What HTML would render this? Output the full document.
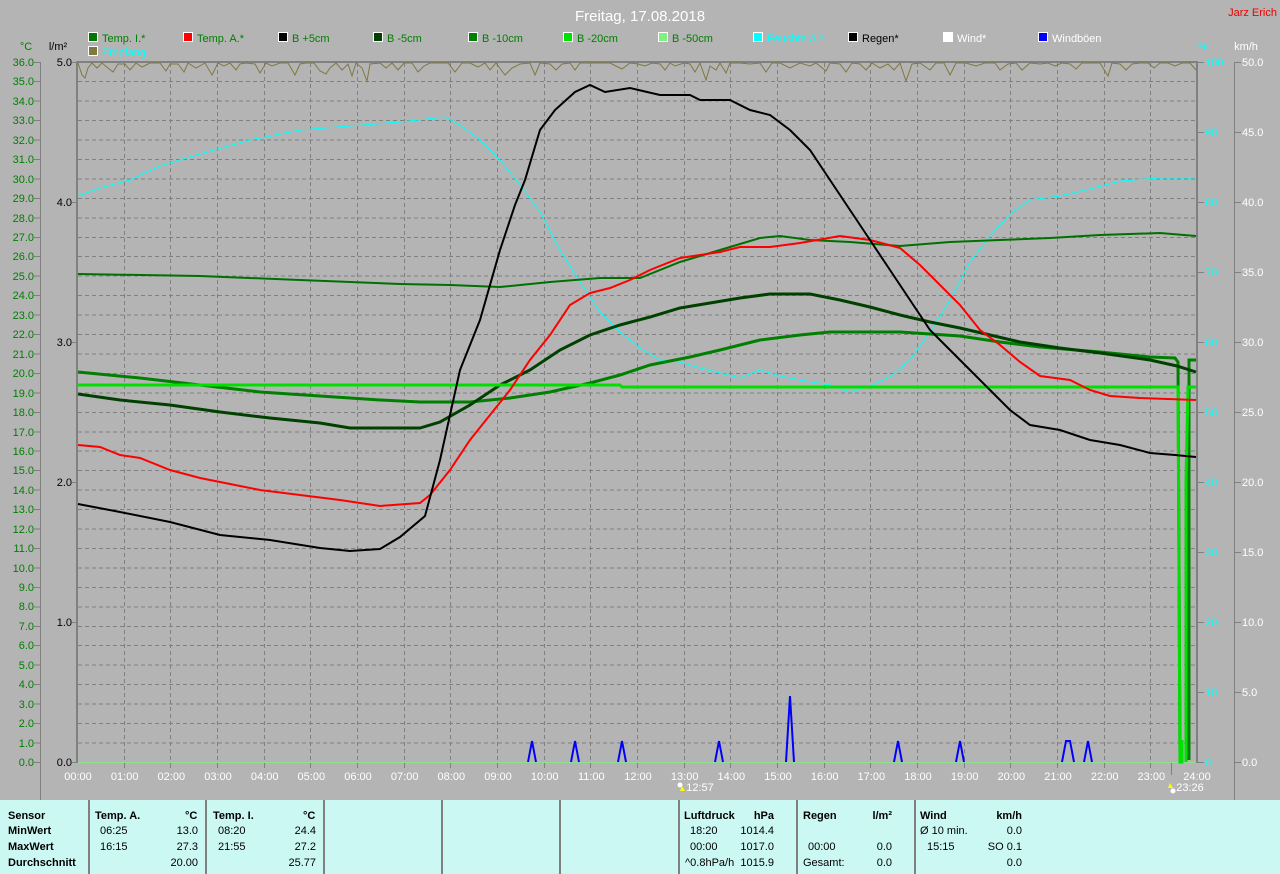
<!DOCTYPE html>
<html><head><meta charset="utf-8"><style>
body{margin:0;background:#b4b4b4;width:1280px;height:874px;overflow:hidden;font-family:"Liberation Sans",sans-serif}
svg{position:absolute;left:0;top:0}
.bp{position:absolute;left:0;top:800px;width:1280px;height:74px;background:#ccf8f4;font-size:11px;color:#000}
.bp div{position:absolute;white-space:nowrap}
.sep{position:absolute;top:0;width:2px;height:74px;background:#808080}
.b{font-weight:bold}
</style></head><body>
<svg width="1280" height="800" font-family="Liberation Sans, sans-serif" font-size="11">
<rect width="1280" height="800" fill="#b4b4b4"/>
<text x="640" y="21" fill="#fff" font-size="15" text-anchor="middle">Freitag, 17.08.2018</text>
<text x="1277" y="16" fill="#e00" font-size="11" text-anchor="end">Jarz Erich</text>
<g stroke="#fff" stroke-width="1">
<rect x="88.5" y="32.5" width="9" height="9" fill="#007800"/>
<rect x="183.5" y="32.5" width="9" height="9" fill="#f00"/>
<rect x="278.5" y="32.5" width="9" height="9" fill="#000"/>
<rect x="373.5" y="32.5" width="9" height="9" fill="#004000"/>
<rect x="468.5" y="32.5" width="9" height="9" fill="#008000"/>
<rect x="563.5" y="32.5" width="9" height="9" fill="#00e000"/>
<rect x="658.5" y="32.5" width="9" height="9" fill="#80f080"/>
<rect x="753.5" y="32.5" width="9" height="9" fill="#0ff"/>
<rect x="848.5" y="32.5" width="9" height="9" fill="#000"/>
<rect x="943.5" y="32.5" width="9" height="9" fill="#fff"/>
<rect x="1038.5" y="32.5" width="9" height="9" fill="#00f"/>
<rect x="88.5" y="46.5" width="9" height="9" fill="#807840"/>
</g>
<g font-size="11">
<text x="102" y="42" fill="#008000">Temp. I.*</text>
<text x="197" y="42" fill="#008000">Temp. A.*</text>
<text x="292" y="42" fill="#008000">B +5cm</text>
<text x="387" y="42" fill="#008000">B -5cm</text>
<text x="482" y="42" fill="#008000">B -10cm</text>
<text x="577" y="42" fill="#008000">B -20cm</text>
<text x="672" y="42" fill="#008000">B -50cm</text>
<text x="767" y="42" fill="#0ff">Feuchte A.*</text>
<text x="862" y="42" fill="#000">Regen*</text>
<text x="957" y="42" fill="#fff">Wind*</text>
<text x="1052" y="42" fill="#fff">Windböen</text>
<text x="102" y="56" fill="#0ff">Empfang</text>
<text x="26" y="50" fill="#008000" text-anchor="middle">°C</text>
<text x="58" y="50" fill="#000" text-anchor="middle">l/m²</text>
<text x="1203" y="50" fill="#0ff" text-anchor="middle">%</text>
<text x="1246" y="50" fill="#fff" text-anchor="middle">km/h</text>
</g>
<!-- axes -->
<g stroke="#808080" stroke-width="1">
<line x1="40.5" y1="62" x2="40.5" y2="800"/>
<line x1="1234.5" y1="62" x2="1234.5" y2="800"/>
</g>
<rect x="76" y="61" width="1122" height="2" fill="#808080"/>
<rect x="76" y="61" width="2" height="702" fill="#808080"/>
<rect x="1196" y="61" width="2" height="702" fill="#808080"/>
<line x1="78" y1="762.5" x2="1196" y2="762.5" stroke="#90e090"/>
<!-- grid -->
<path stroke="#808080" stroke-dasharray="4,3" fill="none" d="M78 81.5H1196M78 101H1196M78 120.5H1196M78 140H1196M78 159.5H1196M78 179H1196M78 198.5H1196M78 218H1196M78 237.5H1196M78 256.5H1196M78 276H1196M78 295.5H1196M78 315H1196M78 334.5H1196M78 354H1196M78 373.5H1196M78 393H1196M78 412.5H1196M78 432H1196M78 451H1196M78 470.5H1196M78 490H1196M78 509.5H1196M78 529H1196M78 548.5H1196M78 568H1196M78 587.5H1196M78 607H1196M78 626.5H1196M78 645.5H1196M78 665H1196M78 684.5H1196M78 704H1196M78 723.5H1196M78 743H1196
M124.5 63V762M170.5 63V762M217.5 63V762M264.5 63V762M310.5 63V762M357.5 63V762M404.5 63V762M450.5 63V762M497.5 63V762M544.5 63V762M590.5 63V762M637.5 63V762M684.5 63V762M730.5 63V762M777.5 63V762M824.5 63V762M870.5 63V762M917.5 63V762M964.5 63V762M1010.5 63V762M1057.5 63V762M1104.5 63V762M1150.5 63V762"/>
<!-- ticks -->
<path stroke="#808080" d="M34 62.5H41M34 81.5H41M34 101H41M34 120.5H41M34 140H41M34 159.5H41M34 179H41M34 198.5H41M34 218H41M34 237.5H41M34 256.5H41M34 276H41M34 295.5H41M34 315H41M34 334.5H41M34 354H41M34 373.5H41M34 393H41M34 412.5H41M34 432H41M34 451H41M34 470.5H41M34 490H41M34 509.5H41M34 529H41M34 548.5H41M34 568H41M34 587.5H41M34 607H41M34 626.5H41M34 645.5H41M34 665H41M34 684.5H41M34 704H41M34 723.5H41M34 743H41M34 762.5H41
M72 62.5H76M72 202.5H76M72 342.5H76M72 482.5H76M72 622.5H76M72 762.5H76
M1198 62.5H1204M1198 132.5H1204M1198 202.5H1204M1198 272.5H1204M1198 342.5H1204M1198 412.5H1204M1198 482.5H1204M1198 552.5H1204M1198 622.5H1204M1198 692.5H1204M1198 762.5H1204
M1234 62.5H1241M1234 132.5H1241M1234 202.5H1241M1234 272.5H1241M1234 342.5H1241M1234 412.5H1241M1234 482.5H1241M1234 552.5H1241M1234 622.5H1241M1234 692.5H1241M1234 762.5H1241
M124.5 763V768M170.5 763V768M217.5 763V768M264.5 763V768M310.5 763V768M357.5 763V768M404.5 763V768M450.5 763V768M497.5 763V768M544.5 763V768M590.5 763V768M637.5 763V768M684.5 763V768M730.5 763V768M777.5 763V768M824.5 763V768M870.5 763V768M917.5 763V768M964.5 763V768M1010.5 763V768M1057.5 763V768M1104.5 763V768M1150.5 763V768M1171.5 763V775"/>
<g fill="#008000" text-anchor="end" font-size="11">
<text x="34" y="66">36.0</text><text x="34" y="85">35.0</text><text x="34" y="105">34.0</text><text x="34" y="124">33.0</text><text x="34" y="144">32.0</text><text x="34" y="163">31.0</text><text x="34" y="183">30.0</text><text x="34" y="202">29.0</text><text x="34" y="222">28.0</text><text x="34" y="241">27.0</text><text x="34" y="260">26.0</text><text x="34" y="280">25.0</text><text x="34" y="299">24.0</text><text x="34" y="319">23.0</text><text x="34" y="338">22.0</text><text x="34" y="358">21.0</text><text x="34" y="377">20.0</text><text x="34" y="397">19.0</text><text x="34" y="416">18.0</text><text x="34" y="436">17.0</text><text x="34" y="455">16.0</text><text x="34" y="474">15.0</text><text x="34" y="494">14.0</text><text x="34" y="513">13.0</text><text x="34" y="533">12.0</text><text x="34" y="552">11.0</text><text x="34" y="572">10.0</text><text x="34" y="591">9.0</text><text x="34" y="610">8.0</text><text x="34" y="630">7.0</text><text x="34" y="649">6.0</text><text x="34" y="669">5.0</text><text x="34" y="688">4.0</text><text x="34" y="708">3.0</text><text x="34" y="727">2.0</text><text x="34" y="747">1.0</text><text x="34" y="766">0.0</text>
</g>
<g fill="#000" text-anchor="end">
<text x="72" y="66">5.0</text><text x="72" y="206">4.0</text><text x="72" y="346">3.0</text><text x="72" y="486">2.0</text><text x="72" y="626">1.0</text><text x="72" y="766">0.0</text>
</g>
<g fill="#0ff">
<text x="1205" y="66">100</text><text x="1205" y="136">90</text><text x="1205" y="206">80</text><text x="1205" y="276">70</text><text x="1205" y="346">60</text><text x="1205" y="416">50</text><text x="1205" y="486">40</text><text x="1205" y="556">30</text><text x="1205" y="626">20</text><text x="1205" y="696">10</text><text x="1205" y="766">0</text>
</g>
<g fill="#fff">
<text x="1242" y="66">50.0</text><text x="1242" y="136">45.0</text><text x="1242" y="206">40.0</text><text x="1242" y="276">35.0</text><text x="1242" y="346">30.0</text><text x="1242" y="416">25.0</text><text x="1242" y="486">20.0</text><text x="1242" y="556">15.0</text><text x="1242" y="626">10.0</text><text x="1242" y="696">5.0</text><text x="1242" y="766">0.0</text>
</g>
<g fill="#fff" text-anchor="middle">
<text x="78" y="780">00:00</text><text x="124.7" y="780">01:00</text><text x="171.3" y="780">02:00</text><text x="218" y="780">03:00</text><text x="264.7" y="780">04:00</text><text x="311.3" y="780">05:00</text><text x="358" y="780">06:00</text><text x="404.7" y="780">07:00</text><text x="451.3" y="780">08:00</text><text x="498" y="780">09:00</text><text x="544.7" y="780">10:00</text><text x="591.3" y="780">11:00</text><text x="638" y="780">12:00</text><text x="684.7" y="780">13:00</text><text x="731.3" y="780">14:00</text><text x="778" y="780">15:00</text><text x="824.7" y="780">16:00</text><text x="871.3" y="780">17:00</text><text x="918" y="780">18:00</text><text x="964.7" y="780">19:00</text><text x="1011.3" y="780">20:00</text><text x="1058" y="780">21:00</text><text x="1104.7" y="780">22:00</text><text x="1151.3" y="780">23:00</text><text x="1197" y="780">24:00</text>
<text x="700" y="791">12:57</text><text x="1190" y="791">23:26</text>
</g>
<circle cx="680" cy="785" r="2.5" fill="#fff"/><path d="M682 786l3 5h-5z" fill="#ff0"/>
<path d="M1170 783l3 5h-5z" fill="#ff0"/><circle cx="1173" cy="791" r="2.5" fill="#fff"/>
<!-- Empfang -->
<polyline fill="none" stroke="#807840" stroke-width="1" points="78,63 82,75 85,78 88,68 92,63 97,68 102,63 108,68 113,72 118,64 125,64 130,70 136,63 142,67 150,63 160,63 166,71 170,64 178,64 184,72 188,63 196,68 205,63 212,75 218,63 224,66 230,63 236,70 240,64 246,63 255,64 260,73 266,63 272,66 280,63 288,63 295,75 300,64 306,63 314,63 320,71 326,74 330,68 336,63 342,70 348,64 352,76 356,63 362,68 367,81 370,64 380,63 386,68 392,63 398,70 404,63 412,63 418,72 424,66 430,63 440,63 448,63 455,72 462,63 470,63 478,67 485,63 490,70 496,63 505,75 512,68 520,64 530,63 535,75 540,63 550,64 556,70 562,64 570,63 575,70 580,63 590,63 600,63 610,63 616,66 622,69 630,63 638,64 645,66 652,63 660,64 665,70 670,63 675,66 684,63 690,64 695,72 700,63 706,80 710,66 716,70 720,63 726,73 730,63 740,63 750,64 760,63 766,72 772,63 780,63 790,68 800,63 810,66 816,63 826,71 830,63 840,64 846,72 852,63 860,64 866,70 872,63 880,68 888,64 894,70 900,63 906,81 912,64 920,63 930,70 936,63 944,63 950,75 956,63 966,63 976,66 985,63 995,63 1000,70 1008,64 1016,63 1022,70 1030,63 1040,64 1048,63 1055,66 1062,63 1070,64 1076,69 1082,63 1090,63 1100,63 1108,76 1112,63 1120,64 1126,70 1132,64 1140,63 1148,63 1154,68 1160,63 1168,63 1175,66 1182,63 1190,63 1196,70"/>
<!-- humidity -->
<polyline fill="none" stroke="#0ff" stroke-width="1" points="78,196 100,188 130,180 160,166 200,154 250,140 300,130 350,126 400,122 445,117 460,125 480,140 500,160 520,185 540,212 560,250 580,282 600,312 620,332 640,348 660,360 680,362 700,368 720,373 740,378 760,370 780,376 800,380 830,385 850,392 870,386 890,377 910,360 930,332 950,300 970,262 990,236 1010,214 1030,200 1060,196 1090,189 1120,181 1160,178 1196,178"/>
<!-- Temp I -->
<polyline fill="none" stroke="#007000" stroke-width="2" points="78,274 200,276 300,280 400,284 450,285 500,287 550,282 600,278 640,278 680,262 720,250 760,238 780,236 810,240 850,242 900,246 950,242 1000,240 1050,238 1100,235 1160,233 1196,236"/>
<!-- B -10cm -->
<polyline fill="none" stroke="#008000" stroke-width="3" points="78,372 140,378 200,385 260,392 320,396 380,400 420,402 470,402 510,398 550,392 590,383 620,375 650,365 690,357 720,350 760,340 800,335 830,332 900,332 960,336 1000,342 1040,347 1100,352 1150,357 1175,358 1178,362 1180,760 M1190,760"/>
<polyline fill="none" stroke="#008000" stroke-width="3" points="1189,760 1189,360 1196,360"/>
<!-- B -5cm -->
<polyline fill="none" stroke="#004000" stroke-width="3" points="78,394 120,400 170,405 220,412 270,418 320,423 350,428 420,428 440,422 470,405 500,385 530,370 560,350 590,335 620,325 650,317 680,308 710,303 740,298 770,294 810,294 840,300 870,307 900,315 930,322 960,328 990,335 1020,342 1060,348 1100,353 1150,360 1177,366 1196,372"/>
<!-- B -20cm -->
<polyline fill="none" stroke="#00e000" stroke-width="3" points="78,385 620,385 622,387 1178,387 1180,762 1182,762 1182,740"/>
<polyline fill="none" stroke="#00e000" stroke-width="3" points="1186,762 1186,480 1188,387 1196,387"/>
<!-- red -->
<polyline fill="none" stroke="#f00" stroke-width="2" points="78,445 100,447 120,455 140,458 170,470 200,478 230,484 260,490 300,495 340,500 380,506 420,503 430,495 450,470 470,440 490,415 510,390 530,360 550,335 570,305 590,293 610,288 630,280 650,270 680,258 700,255 720,252 740,247 770,247 800,243 840,236 870,240 900,248 920,265 940,285 960,305 980,330 1000,345 1020,362 1040,376 1070,380 1090,390 1110,396 1140,398 1196,400"/>
<!-- black -->
<polyline fill="none" stroke="#000" stroke-width="2" points="78,504 120,512 170,522 220,535 270,540 320,548 350,551 380,549 400,537 425,516 440,460 460,370 480,320 500,250 515,205 525,180 540,130 555,110 575,92 590,85 605,92 630,88 660,95 690,95 700,100 730,100 750,110 770,115 790,130 810,150 830,180 850,210 870,240 890,270 910,300 930,330 950,350 970,370 990,390 1010,410 1030,425 1060,430 1090,440 1120,445 1150,453 1175,455 1196,457"/>
<!-- gusts -->
<path fill="none" stroke="#00f" stroke-width="2" d="M528 762L532 741L536 762M571 762L575 741L579 762M618 762L622 741L626 762M715 762L719 741L723 762M786 762L790 696L794 762M894 762L898 741L902 762M956 762L960 741L964 762M1062 762L1066 741L1070 741L1074 762M1084 762L1088 741L1092 762"/>
</svg>
<div class="bp">
<span class="sep" style="left:88px"></span><span class="sep" style="left:205px"></span><span class="sep" style="left:323px"></span><span class="sep" style="left:441px"></span><span class="sep" style="left:559px"></span><span class="sep" style="left:678px"></span><span class="sep" style="left:796px"></span><span class="sep" style="left:914px"></span>
<div class="b" style="left:8px;top:10px">Sensor</div><div class="b" style="left:8px;top:25px">MinWert</div><div class="b" style="left:8px;top:41px">MaxWert</div><div class="b" style="left:8px;top:57px">Durchschnitt</div>
<div class="b" style="left:95px;top:10px">Temp. A.</div><div class="b" style="left:185px;top:10px">°C</div>
<div style="left:100px;top:25px">06:25</div><div style="right:1082px;top:25px">13.0</div>
<div style="left:100px;top:41px">16:15</div><div style="right:1082px;top:41px">27.3</div>
<div style="right:1082px;top:57px">20.00</div>
<div class="b" style="left:213px;top:10px">Temp. I.</div><div class="b" style="left:303px;top:10px">°C</div>
<div style="left:218px;top:25px">08:20</div><div style="right:964px;top:25px">24.4</div>
<div style="left:218px;top:41px">21:55</div><div style="right:964px;top:41px">27.2</div>
<div style="right:964px;top:57px">25.77</div>
<div class="b" style="left:684px;top:10px">Luftdruck</div><div class="b" style="right:506px;top:10px">hPa</div>
<div style="left:690px;top:25px">18:20</div><div style="right:506px;top:25px">1014.4</div>
<div style="left:690px;top:41px">00:00</div><div style="right:506px;top:41px">1017.0</div>
<div style="left:685px;top:57px">^0.8hPa/h</div><div style="right:506px;top:57px">1015.9</div>
<div class="b" style="left:803px;top:10px">Regen</div><div class="b" style="right:388px;top:10px">l/m²</div>
<div style="left:808px;top:41px">00:00</div><div style="right:388px;top:41px">0.0</div>
<div style="left:803px;top:57px">Gesamt:</div><div style="right:388px;top:57px">0.0</div>
<div class="b" style="left:920px;top:10px">Wind</div><div class="b" style="right:258px;top:10px">km/h</div>
<div style="left:920px;top:25px">Ø 10 min.</div><div style="right:258px;top:25px">0.0</div>
<div style="left:927px;top:41px">15:15</div><div style="right:258px;top:41px">SO 0.1</div>
<div style="right:258px;top:57px">0.0</div>
</div>
</body></html>
